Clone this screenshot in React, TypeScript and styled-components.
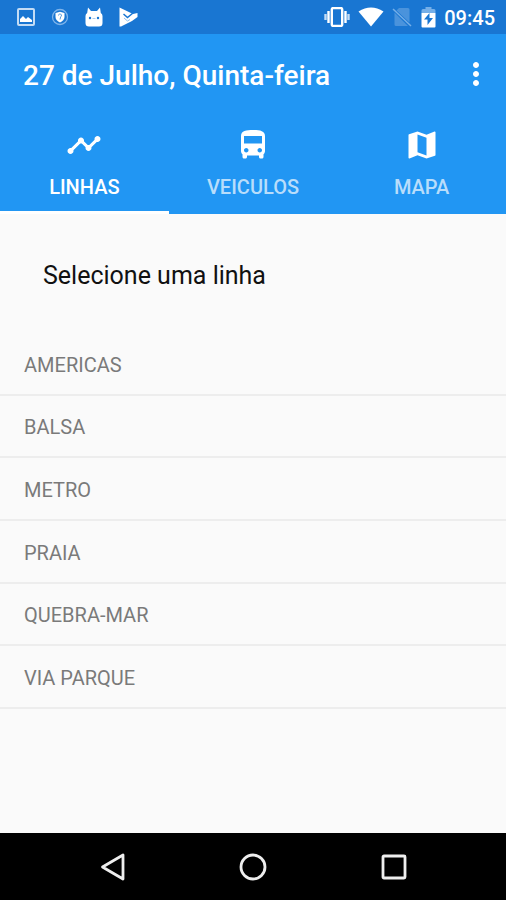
import React, { useState } from "react";
import styled, { createGlobalStyle } from "styled-components";

const GlobalStyle = createGlobalStyle`
  *, *::before, *::after { box-sizing: border-box; }
  body {
    margin: 0;
    background: #fafafa;
    font-family: Roboto, "Liberation Sans", sans-serif;
  }
  button { font: inherit; border: 0; padding: 0; background: none; cursor: pointer; }
`;

const Screen = styled.div`
  min-height: 100vh;
  display: flex;
  flex-direction: column;
  background: #fafafa;
`;

const StatusBar = styled.div`
  height: 34px;
  padding: 0 11px 0 17px;
  display: flex;
  align-items: center;
  justify-content: space-between;
  background: #1976d2;
  color: #fff;
`;

const StatusGroup = styled.div<{ $gap: number }>`
  display: flex;
  align-items: center;
  gap: ${({ $gap }) => $gap}px;
`;

const Clock = styled.time`
  font-size: 20px;
  line-height: 24px;
  font-weight: 500;
  padding-top: 2px;
`;

const Icon = styled.svg`
  display: block;
  flex: none;
`;

const AppBar = styled.header`
  background: #2196f3;
  color: #fff;
`;

const Toolbar = styled.div`
  height: 84px;
  padding: 0 12px 0 23px;
  display: flex;
  align-items: center;
  justify-content: space-between;
`;

const Title = styled.h1`
  margin: 0;
  font-size: 28px;
  line-height: 32px;
  font-weight: 500;
`;

const MenuButton = styled.button`
  color: #fff;
  height: 42px;
  margin-bottom: 4px;
`;

const Tabs = styled.div`
  display: grid;
  grid-template-columns: repeat(3, 1fr);
`;

const Tab = styled.button<{ $active: boolean }>`
  height: 96px;
  padding-top: 9px;
  display: flex;
  flex-direction: column;
  align-items: center;
  gap: 12px;
  color: #fff;
  border-bottom: 3px solid ${({ $active }) => ($active ? "#fff" : "transparent")};
`;

const TabLabel = styled.span<{ $active: boolean }>`
  font-size: 20px;
  line-height: 24px;
  font-weight: 500;
  color: ${({ $active }) => ($active ? "#fff" : "#b8ddfb")};
`;

const Content = styled.main`
  flex: 1;
`;

const Heading = styled.h2`
  margin: 0;
  padding: 46px 43px 41px;
  font-size: 25px;
  line-height: 32px;
  font-weight: 400;
  color: #111;
`;

const LineList = styled.ul`
  margin: 0;
  padding: 0;
  list-style: none;
  min-height: 376px;
  display: grid;
  grid-auto-rows: 1fr;
`;

const LineItem = styled.li`
  display: flex;
  border-bottom: 2px solid #ededed;
`;

const LineButton = styled.button`
  flex: 1;
  padding: 3px 24px 0;
  text-align: left;
  font-size: 20px;
  line-height: 24px;
  color: #7a7a7a;
`;

const NavBar = styled.nav`
  height: 67px;
  padding: 0 42px;
  display: grid;
  grid-template-columns: repeat(3, 1fr);
  background: #000;
`;

const NavButton = styled.button`
  display: flex;
  align-items: center;
  justify-content: center;
`;

const PhotoIcon = () => (
  <Icon width="18" height="18" viewBox="0 0 18 18" aria-hidden="true">
    <rect x="1" y="1" width="16" height="16" rx="1" fill="none" stroke="#c3dcf5" strokeWidth="2" />
    <path d="M3 14v-3l3-3 3 3 2-2 4 3v2z" fill="#fff" />
  </Icon>
);

const ShieldIcon = () => (
  <Icon width="18" height="18" viewBox="0 0 18 18" aria-hidden="true">
    <circle cx="9" cy="9" r="7.5" fill="none" stroke="#7fb4ea" strokeWidth="1.3" />
    <path d="M9 3.8 13.5 5v4c0 2.500-2 4.500-4.500 5.500C6.500 13.500 4.500 11.500 4.500 9V5z" fill="#fff" />
    <path d="M7.500 7.500a1.500 1.500 0 1 1 2.200 1.300L9 11.500" fill="none" stroke="#5b9ee0" strokeWidth="1" />
  </Icon>
);

const DroidIcon = () => (
  <Icon width="18" height="20" viewBox="0 0 18 20" aria-hidden="true">
    <path d="M3 0.500 6 4h6l3-3.500.8 5.500q1.700 1 1.700 3v7q0 3.500-3.500 3.500H4Q.5 19.500.5 16V9q0-2 1.700-3z" fill="#fff" />
    <circle cx="5" cy="11" r="1.200" fill="#1976d2" />
    <circle cx="13" cy="11" r="1.200" fill="#1976d2" />
    <path d="M7.500 11.500h3" stroke="#a9cdf2" strokeWidth="1" />
  </Icon>
);

const PlayCheckIcon = () => (
  <Icon width="19" height="20" viewBox="0 0 19 20" aria-hidden="true">
    <path d="M.500.500 14 7l4.500-1v4L13 14 2 19.500H.500z" fill="#fff" />
    <path d="m4.500 7 4 3.500L14 6" fill="none" stroke="#1976d2" strokeWidth="1.500" />
    <path d="m5 11 3.500 3 2.500-1.500" fill="none" stroke="#8fbfee" strokeWidth="1" />
  </Icon>
);

const VibrateIcon = () => (
  <Icon width="26" height="20" viewBox="0 0 26 20" aria-hidden="true">
    <rect x="7.800" y="1" width="10.400" height="18" rx="1.500" fill="none" stroke="#fff" strokeWidth="2.400" />
    <path d="M4.500 4v12M21.500 4v12" stroke="#fff" strokeWidth="2.400" />
    <path d="M1.500 7v6M24.500 7v6" stroke="#c3dcf5" strokeWidth="2.400" />
  </Icon>
);

const WifiIcon = () => (
  <Icon width="26" height="20" viewBox="0 0 26 20" aria-hidden="true">
    <path d="M.5 4.500Q13-3.500 25.500 4.500L13 19.500z" fill="#fff" />
  </Icon>
);

const NoSimIcon = () => (
  <Icon width="21" height="20" viewBox="0 0 21 20" aria-hidden="true">
    <path d="M7 1h9q1.500 0 1.500 1.500v13L4.500 3.500zM2.500 5.500 16 19H4q-1.500 0-1.500-1.500z" fill="#4a93dc" />
    <path d="m1 2 18 17" stroke="#75afe8" strokeWidth="1.500" />
  </Icon>
);

const BatteryIcon = () => (
  <Icon width="15" height="21" viewBox="0 0 15 21" aria-hidden="true">
    <path d="M4.500 0h6v2H13q1.500 0 1.500 1.500V6H.500V3.500Q.500 2 2 2h2.500z" fill="#75afe8" />
    <path d="M.500 6h14v13.500q0 1-1 1h-12q-1 0-1-1z" fill="#fff" />
    <path d="M8.500 6 3 12.500h3.500V18L12 11H8.500z" fill="#1976d2" />
  </Icon>
);

const MoreIcon = () => (
  <Icon width="36" height="36" viewBox="0 0 24 24" fill="currentColor" aria-hidden="true">
    <path d="M12 8c1.100 0 2-.9 2-2s-.9-2-2-2-2 .9-2 2 .9 2 2 2zm0 2c-1.100 0-2 .9-2 2s.9 2 2 2 2-.9 2-2-.9-2-2-2zm0 6c-1.100 0-2 .9-2 2s.9 2 2 2 2-.9 2-2-.9-2-2-2z" />
  </Icon>
);

const tabs = [
  {
    label: "LINHAS",
    path: "M23 8c0 1.100-.9 2-2 2-.18 0-.35-.02-.51-.07l-3.560 3.550c.05.16.07.34.07.52 0 1.100-.9 2-2 2s-2-.9-2-2c0-.18.02-.36.07-.52l-2.550-2.550c-.16.05-.34.07-.52.07s-.36-.02-.52-.07l-4.550 4.560c.05.16.07.33.07.51 0 1.100-.9 2-2 2s-2-.9-2-2 .9-2 2-2c.18 0 .35.02.51.07l4.560-4.550C8.020 9.360 8 9.180 8 9c0-1.100.9-2 2-2s2 .9 2 2c0 .18-.02.36-.07.52l2.550 2.550c.16-.05.34-.07.52-.07s.36.02.52.07l3.550-3.560C19.020 8.350 19 8.180 19 8c0-1.100.9-2 2-2s2 .9 2 2z",
  },
  {
    label: "VEICULOS",
    path: "M4 16c0 .88.39 1.670 1 2.220V20c0 .55.45 1 1 1h1c.55 0 1-.45 1-1v-1h8v1c0 .55.45 1 1 1h1c.55 0 1-.45 1-1v-1.780c.61-.55 1-1.340 1-2.220V6c0-3.500-3.580-4-8-4s-8 .5-8 4v10zm3.500 1c-.83 0-1.500-.67-1.500-1.500S6.670 14 7.500 14s1.500.67 1.500 1.500S8.330 17 7.500 17zm9 0c-.83 0-1.500-.67-1.500-1.500s.67-1.500 1.500-1.500 1.500.67 1.500 1.500-.67 1.500-1.500 1.500zm1.500-6H6V6h12v5z",
  },
  {
    label: "MAPA",
    path: "M20.500 3l-.16.03L15 5.100 9 3 3.360 4.900c-.21.07-.36.25-.36.48V20.500c0 .28.22.5.5.5l.16-.03L9 18.900l6 2.100 5.640-1.900c.21-.07.36-.25.36-.48V3.500c0-.28-.22-.5-.5-.5zM15 19l-6-2.110V5l6 2.110V19z",
  },
];

const lines = ["AMERICAS", "BALSA", "METRO", "PRAIA", "QUEBRA-MAR", "VIA PARQUE"];

export default function App() {
  const [active, setActive] = useState("LINHAS");

  return (
    <>
      <GlobalStyle />
      <Screen>
        <StatusBar>
          <StatusGroup $gap={16}>
            <PhotoIcon />
            <ShieldIcon />
            <DroidIcon />
            <PlayCheckIcon />
          </StatusGroup>
          <StatusGroup $gap={8}>
            <VibrateIcon />
            <WifiIcon />
            <NoSimIcon />
            <BatteryIcon />
            <Clock>09:45</Clock>
          </StatusGroup>
        </StatusBar>
        <AppBar>
          <Toolbar>
            <Title>27 de Julho, Quinta-feira</Title>
            <MenuButton type="button" aria-label="Mais opções">
              <MoreIcon />
            </MenuButton>
          </Toolbar>
          <Tabs role="tablist">
            {tabs.map(({ label, path }) => (
              <Tab
                key={label}
                type="button"
                role="tab"
                aria-selected={active === label}
                $active={active === label}
                onClick={() => setActive(label)}
              >
                <Icon width="36" height="36" viewBox="0 0 24 24" fill="currentColor" aria-hidden="true">
                  <path d={path} />
                </Icon>
                <TabLabel $active={active === label}>{label}</TabLabel>
              </Tab>
            ))}
          </Tabs>
        </AppBar>
        <Content>
          <Heading>Selecione uma linha</Heading>
          <LineList>
            {lines.map((line) => (
              <LineItem key={line}>
                <LineButton type="button">{line}</LineButton>
              </LineItem>
            ))}
          </LineList>
        </Content>
        <NavBar>
          <NavButton type="button" aria-label="Voltar">
            <Icon width="26" height="28" viewBox="0 0 26 28" fill="none" stroke="#eee" strokeWidth="2.800" strokeLinejoin="round" aria-hidden="true">
              <path d="M24 2v24L3.500 14z" />
            </Icon>
          </NavButton>
          <NavButton type="button" aria-label="Início">
            <Icon width="28" height="28" viewBox="0 0 28 28" fill="none" stroke="#eee" strokeWidth="2.800" aria-hidden="true">
              <circle cx="14" cy="14" r="12" />
            </Icon>
          </NavButton>
          <NavButton type="button" aria-label="Recentes">
            <Icon width="26" height="26" viewBox="0 0 26 26" fill="none" stroke="#eee" strokeWidth="2.800" strokeLinejoin="round" aria-hidden="true">
              <rect x="2" y="2" width="22" height="22" rx="1" />
            </Icon>
          </NavButton>
        </NavBar>
      </Screen>
    </>
  );
}
